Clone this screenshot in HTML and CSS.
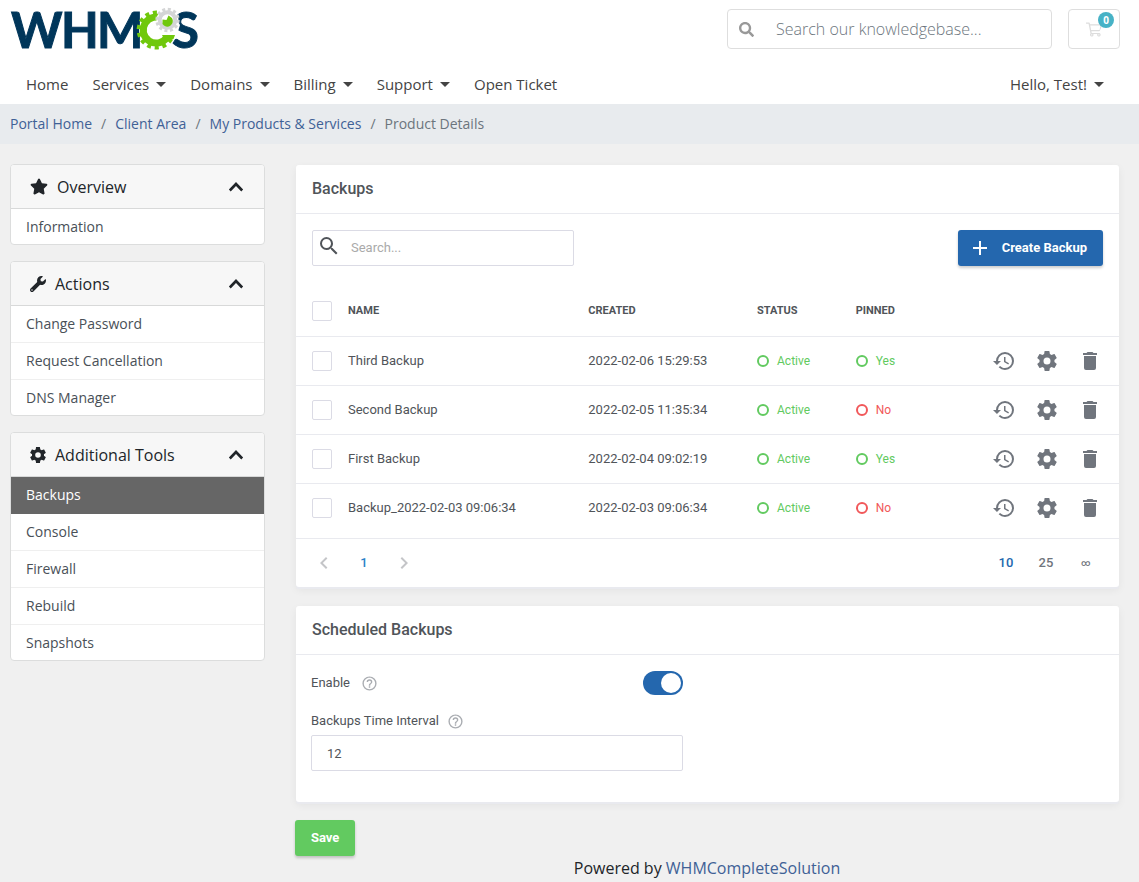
FILE: index.html
```html
<!DOCTYPE html>
<html lang="en">
<head>
<meta charset="utf-8">
<title>Backups - WHMCS</title>
<meta name="viewport" content="width=device-width, initial-scale=1">
<link rel="stylesheet" href="styles.css">
</head>
<body>
<svg class="sprite" aria-hidden="true">
  <symbol id="i-search" viewBox="0 0 512 512"><path d="M505 442.700 405.300 343c-4.500-4.500-10.600-7-17-7H372c27.600-35.300 44-79.700 44-128C416 93.100 322.900 0 208 0S0 93.100 0 208s93.100 208 208 208c48.300 0 92.700-16.400 128-44v16.300c0 6.400 2.500 12.500 7 17l99.700 99.700c9.400 9.400 24.600 9.400 33.900 0l28.300-28.300c9.400-9.400 9.400-24.600.1-34zM208 336c-70.700 0-128-57.200-128-128 0-70.700 57.200-128 128-128 70.700 0 128 57.200 128 128 0 70.700-57.200 128-128 128z"/></symbol>
  <symbol id="i-magnify" viewBox="0 0 24 24"><path d="M9.500 3A6.500 6.500 0 0 1 16 9.500c0 1.610-.59 3.090-1.560 4.230l.27.270h.79l5 5-1.500 1.500-5-5v-.79l-.27-.27A6.516 6.516 0 0 1 9.500 16 6.500 6.500 0 0 1 3 9.500 6.500 6.500 0 0 1 9.500 3m0 2C7 5 5 7 5 9.500S7 14 9.500 14 14 12 14 9.500 12 5 9.500 5z"/></symbol>
  <symbol id="i-cart" viewBox="0 0 576 512"><path d="M551.991 64H144.280l-8.726-44.608C133.350 8.128 123.478 0 112 0H12C5.373 0 0 5.373 0 12v24c0 6.627 5.373 12 12 12h80.240l69.594 355.701C150.796 415.201 144 430.802 144 448c0 35.346 28.654 64 64 64s64-28.654 64-64a63.681 63.681 0 0 0-8.583-32h145.167a63.681 63.681 0 0 0-8.583 32c0 35.346 28.654 64 64 64 35.346 0 64-28.654 64-64 0-17.993-7.435-34.240-19.388-45.868C506.022 391.891 496.760 384 485.328 384H206.888l-12.522-64h277.882c14.800 0 27.700-10.100 31.100-24.500l79.700-192C587.600 83.500 572.600 64 551.991 64zM208 472c-13.234 0-24-10.766-24-24s10.766-24 24-24 24 10.766 24 24-10.766 24-24 24zm256 0c-13.234 0-24-10.766-24-24s10.766-24 24-24 24 10.766 24 24-10.766 24-24 24zm23.438-200H184.980l-31.310-160h368.548l-34.780 160z"/></symbol>
  <symbol id="i-star" viewBox="0 0 576 512"><path d="M259.300 17.800 194 150.200 47.900 171.500c-26.200 3.800-36.700 36.100-17.700 54.600l105.700 103-25 145.500c-4.500 26.300 23.200 46 46.400 33.700L288 439.600l130.700 68.700c23.200 12.200 50.900-7.400 46.400-33.700l-25-145.500 105.700-103c19-18.500 8.500-50.800-17.700-54.600L382 150.200 316.700 17.800c-11.700-23.600-45.600-23.900-57.400 0z"/></symbol>
  <symbol id="i-wrench" viewBox="0 0 512 512"><path d="M507.730 109.100c-2.240-9.030-13.540-12.090-20.120-5.510l-74.360 74.360-67.880-11.310-11.310-67.880 74.360-74.360c6.620-6.620 3.430-17.900-5.660-20.160-47.380-11.740-99.550.91-136.580 37.930-39.640 39.640-50.550 97.100-34.050 147.200L18.740 402.760c-24.990 24.990-24.990 65.510 0 90.500 24.990 24.990 65.510 24.990 90.500 0l213.210-213.210c50.120 16.710 107.470 5.680 147.370-34.220 37.070-37.070 49.700-89.320 37.910-136.730zM64 472c-13.250 0-24-10.750-24-24 0-13.260 10.750-24 24-24s24 10.740 24 24c0 13.250-10.750 24-24 24z"/></symbol>
  <symbol id="i-cog" viewBox="0 0 24 24"><path d="M12 15.500A3.500 3.500 0 0 1 8.500 12 3.500 3.500 0 0 1 12 8.500a3.500 3.500 0 0 1 3.500 3.500 3.500 3.500 0 0 1-3.500 3.500m7.430-2.530c.04-.32.07-.64.07-.97s-.03-.66-.07-1l2.110-1.630c.19-.15.24-.42.12-.64l-2-3.460c-.12-.22-.39-.31-.61-.22l-2.490 1c-.52-.39-1.060-.73-1.690-.98l-.37-2.650A.506.506 0 0 0 14 2h-4c-.25 0-.46.18-.5.42l-.37 2.650c-.63.25-1.170.59-1.690.98l-2.490-1c-.22-.09-.49 0-.61.22l-2 3.460c-.13.22-.07.49.12.64L4.570 11c-.04.340-.07.670-.07 1s.03.650.07.970l-2.110 1.660c-.19.150-.25.420-.12.640l2 3.460c.12.220.390.300.610.220l2.490-1.010c.520.400 1.060.740 1.690.990l.37 2.650c.04.240.250.420.500.420h4c.250 0 .460-.180.500-.420l.37-2.650c.63-.260 1.170-.590 1.690-.990l2.490 1.010c.220.080.490 0 .610-.220l2-3.460c.120-.220.070-.490-.120-.640z"/></symbol>
  <symbol id="i-up" viewBox="0 0 16 16"><path d="M1.800 11.500 8 5l6.200 6.500" fill="none" stroke="currentColor" stroke-width="2.600"/></symbol>
  <symbol id="i-history" viewBox="0 0 24 24"><path d="M13.500 8H12v5l4.280 2.540.720-1.210-3.500-2.080V8M13 3a9 9 0 0 0-9 9H1l3.960 4.030L9 12H6a7 7 0 0 1 7-7 7 7 0 0 1 7 7 7 7 0 0 1-7 7c-1.930 0-3.680-.79-4.940-2.060l-1.420 1.420A8.896 8.896 0 0 0 13 21a9 9 0 0 0 9-9 9 9 0 0 0-9-9"/></symbol>
  <symbol id="i-trash" viewBox="0 0 24 24"><path d="M19 4h-3.500l-1-1h-5l-1 1H5v2h14M6 19a2 2 0 0 0 2 2h8a2 2 0 0 0 2-2V7H6z"/></symbol>
  <symbol id="i-plus" viewBox="0 0 24 24"><path d="M19 13h-6v6h-2v-6H5v-2h6V5h2v6h6z"/></symbol>
  <symbol id="i-left" viewBox="0 0 24 24"><path d="M15.410 16.580 10.830 12l4.580-4.590L14 6l-6 6 6 6z"/></symbol>
  <symbol id="i-right" viewBox="0 0 24 24"><path d="M8.590 16.580 13.170 12 8.590 7.410 10 6l6 6-6 6z"/></symbol>
  <symbol id="i-help" viewBox="0 0 24 24"><path d="M11 18h2v-2h-2v2m1-16A10 10 0 0 0 2 12a10 10 0 0 0 10 10 10 10 0 0 0 10-10A10 10 0 0 0 12 2m0 18c-4.410 0-8-3.590-8-8s3.590-8 8-8 8 3.590 8 8-3.590 8-8 8m0-14a4 4 0 0 0-4 4h2a2 2 0 0 1 2-2 2 2 0 0 1 2 2c0 2-3 1.750-3 5h2c0-2.250 3-2.500 3-5a4 4 0 0 0-4-4z"/></symbol>
</svg>

<header class="header">
  <div class="topbar">
    <a class="logo" href="#" aria-label="WHMCS">
      <svg width="196" height="62" viewBox="10 0 196 62">
        <g class="logo-letters">
          <text x="11" y="48">W</text><text x="61" y="48">H</text><text x="97" y="48">M</text><text x="172" y="48">S</text>
        </g>
        <circle cx="156" cy="30" r="17" fill="#fff"/>
        <path d="M156 30l18-15 6 10-4 13-12 6z" fill="#fff"/>
        <g fill="none" stroke="#70c80c">
          <path d="M166.900 37.500A13 13 0 1 1 163 19" stroke-width="7"/>
          <path d="M171.200 39A17.500 17.500 0 1 1 164 14.400" stroke-width="4" stroke-dasharray="4 3.700"/>
        </g>
        <path d="M162 35h13l-1.500 4-8 3z" fill="#70c80c"/>
        <circle cx="167.500" cy="20" r="11" fill="#fff"/>
        <g fill="none" stroke="#d4d5d6">
          <circle cx="167.500" cy="20" r="7.800" stroke-width="4"/>
          <circle cx="167.500" cy="20" r="10.700" stroke-width="3" stroke-dasharray="3 2.600"/>
        </g>
        <path d="M162.500 19.500l4 .500 2-4.500 3.500 2.500a5.500 5.500 0 0 1-9.500 6z" fill="#70c80c"/>
      </svg>
    </a>
    <form class="kb" role="search">
      <button class="kb-btn" type="button" aria-label="Search"><svg width="15" height="15"><use href="#i-search"/></svg></button>
      <input class="kb-input" type="text" aria-label="Search our knowledgebase" placeholder="Search our knowledgebase...">
    </form>
    <a class="cart" href="#" aria-label="Shopping cart"><svg width="16" height="15"><use href="#i-cart"/></svg><span class="badge">0</span></a>
  </div>
  <nav class="nav">
    <a href="#">Home</a>
    <a class="drop" href="#">Services</a>
    <a class="drop" href="#">Domains</a>
    <a class="drop" href="#">Billing</a>
    <a class="drop" href="#">Support</a>
    <a href="#">Open Ticket</a>
    <a class="drop user" href="#">Hello, Test!</a>
  </nav>
</header>

<nav class="crumbs" aria-label="Breadcrumb">
  <a href="#">Portal Home</a><span>/</span><a href="#">Client Area</a><span>/</span><a href="#">My Products &amp; Services</a><span>/</span><span class="here">Product Details</span>
</nav>

<div class="page">
  <aside class="sidebar">
    <section class="side-card">
      <h3><svg width="18" height="17"><use href="#i-star"/></svg>Overview<svg class="chev" width="16" height="16"><use href="#i-up"/></svg></h3>
      <a href="#">Information</a>
    </section>
    <section class="side-card">
      <h3><svg width="16" height="16"><use href="#i-wrench"/></svg>Actions<svg class="chev" width="16" height="16"><use href="#i-up"/></svg></h3>
      <a href="#">Change Password</a>
      <a href="#">Request Cancellation</a>
      <a href="#">DNS Manager</a>
    </section>
    <section class="side-card">
      <h3><svg width="16" height="16" viewBox="2 2 20 20"><use href="#i-cog" width="24" height="24"/></svg>Additional Tools<svg class="chev" width="16" height="16"><use href="#i-up"/></svg></h3>
      <a class="active" href="#">Backups</a>
      <a href="#">Console</a>
      <a href="#">Firewall</a>
      <a href="#">Rebuild</a>
      <a href="#">Snapshots</a>
    </section>
  </aside>

  <main class="main">
    <section class="panel">
      <h2>Backups</h2>
      <div class="tools">
        <div class="search"><svg width="24" height="24"><use href="#i-magnify"/></svg><input type="text" aria-label="Search backups" placeholder="Search..."></div>
        <button class="btn" type="button"><svg width="24" height="24"><use href="#i-plus"/></svg>Create Backup</button>
      </div>
      <table class="grid">
        <thead>
          <tr><th class="c-check"><input type="checkbox" aria-label="Select all"></th><th class="c-name">Name</th><th class="c-created">Created</th><th class="c-status">Status</th><th class="c-pinned">Pinned</th><th></th></tr>
        </thead>
        <tbody>
          <tr><td><input type="checkbox" aria-label="Select Third Backup"></td><td>Third Backup</td><td>2022-02-06 15:29:53</td><td><span class="state ok">Active</span></td><td><span class="state ok">Yes</span></td>
            <td><div class="acts"><button type="button" aria-label="Restore"><svg><use href="#i-history"/></svg></button><button type="button" aria-label="Settings"><svg><use href="#i-cog"/></svg></button><button type="button" aria-label="Delete"><svg><use href="#i-trash"/></svg></button></div></td></tr>
          <tr><td><input type="checkbox" aria-label="Select Second Backup"></td><td>Second Backup</td><td>2022-02-05 11:35:34</td><td><span class="state ok">Active</span></td><td><span class="state bad">No</span></td>
            <td><div class="acts"><button type="button" aria-label="Restore"><svg><use href="#i-history"/></svg></button><button type="button" aria-label="Settings"><svg><use href="#i-cog"/></svg></button><button type="button" aria-label="Delete"><svg><use href="#i-trash"/></svg></button></div></td></tr>
          <tr><td><input type="checkbox" aria-label="Select First Backup"></td><td>First Backup</td><td>2022-02-04 09:02:19</td><td><span class="state ok">Active</span></td><td><span class="state ok">Yes</span></td>
            <td><div class="acts"><button type="button" aria-label="Restore"><svg><use href="#i-history"/></svg></button><button type="button" aria-label="Settings"><svg><use href="#i-cog"/></svg></button><button type="button" aria-label="Delete"><svg><use href="#i-trash"/></svg></button></div></td></tr>
          <tr><td><input type="checkbox" aria-label="Select Backup_2022-02-03 09:06:34"></td><td>Backup_2022-02-03 09:06:34</td><td>2022-02-03 09:06:34</td><td><span class="state ok">Active</span></td><td><span class="state bad">No</span></td>
            <td><div class="acts"><button type="button" aria-label="Restore"><svg><use href="#i-history"/></svg></button><button type="button" aria-label="Settings"><svg><use href="#i-cog"/></svg></button><button type="button" aria-label="Delete"><svg><use href="#i-trash"/></svg></button></div></td></tr>
        </tbody>
      </table>
      <div class="pager">
        <button class="arrow" type="button" aria-label="Previous page"><svg width="24" height="24"><use href="#i-left"/></svg></button>
        <button class="current" type="button">1</button>
        <button class="arrow" type="button" aria-label="Next page"><svg width="24" height="24"><use href="#i-right"/></svg></button>
        <button class="size current-size" type="button">10</button>
        <button type="button">25</button>
        <button class="inf" type="button">∞</button>
      </div>
    </section>

    <form class="schedule">
      <section class="panel">
        <h2>Scheduled Backups</h2>
        <div class="fields">
          <div class="field-row">
            <label for="enable">Enable</label><svg class="help" width="17" height="17"><use href="#i-help"/></svg>
            <input class="switch" id="enable" type="checkbox" role="switch" checked>
          </div>
          <div class="field-label">
            <label for="interval">Backups Time Interval</label><svg class="help" width="17" height="17"><use href="#i-help"/></svg>
          </div>
          <input class="text" id="interval" type="text" value="12">
        </div>
      </section>
      <button class="btn save" type="button">Save</button>
    </form>
    <footer class="footer">Powered by <a href="#">WHMCompleteSolution</a></footer>
  </main>
</div>
</body>
</html>
```
FILE: styles.css
```css
* { box-sizing: border-box; }
body { margin: 0; background: #f0f0f0; font-family: "Open Sans", sans-serif; font-size: 14px; line-height: 22px; color: #212529; }
a { text-decoration: none; }
svg { fill: currentColor; flex: none; display: block; }
input, button { font: inherit; color: inherit; }
button { border: 0; background: none; padding: 0; cursor: pointer; }
.sprite { width: 0; height: 0; position: absolute; }

.header { background: #fff; }
.topbar { display: flex; align-items: flex-start; gap: 16px; padding: 0 19px 0 10px; height: 64px; }
.logo { margin-right: auto; }
.logo-letters { font-family: Lato, sans-serif; font-weight: 700; font-size: 49px; fill: #00365a; stroke: #00365a; stroke-width: 1; }
.kb { display: flex; width: 325px; height: 40px; margin-top: 9px; border: 1px solid #dedede; border-radius: 4px; background: #fff; }
.kb-btn { width: 37px; display: grid; place-items: center; color: #999; }
.kb-input { flex: 1; min-width: 0; border: 0; outline: 0; background: none; padding: 0 11px; font-size: 16px; font-weight: 300; }
.kb-input::placeholder { color: #6c757d; opacity: 1; }
.cart { position: relative; width: 52px; height: 40px; margin-top: 9px; border: 1px solid #dedede; border-radius: 4px; display: grid; place-items: center; color: #ddd; }
.badge { position: absolute; top: 2px; right: 5px; width: 16px; height: 16px; border-radius: 8px; background: #47b2c6; color: #fff; font-size: 10px; font-weight: 700; line-height: 16px; text-align: center; }
.nav { display: flex; gap: 24px; height: 40px; padding: 0 35px 0 26px; align-items: center; font-size: 15px; }
.nav a { color: #444; }
.drop { display: flex; align-items: center; gap: 7px; }
.drop::after { content: ""; border: 5px solid transparent; border-top-color: #444; border-bottom: 0; }
.user { margin-left: auto; }

.crumbs { display: flex; gap: 9px; align-items: center; height: 40px; padding: 0 10px; background: #e8ebee; color: #6c757d; }
.crumbs a, .footer a { color: #3f6196; }

.page { display: flex; gap: 30px; padding: 20px 20px 0 10px; align-items: flex-start; }
.sidebar { flex: 0 0 255px; display: grid; gap: 16px; }
.side-card { border: 1px solid #dcdddd; border-radius: 4px; background: #fff; overflow: hidden; }
.side-card h3 { display: flex; align-items: center; gap: 9px; margin: 0; height: 44px; padding: 0 20px 0 19px; background: #f7f7f7; border-bottom: 1px solid #d8d9d9; font-size: 16px; font-weight: 400; }
.chev { margin-left: auto; }
.side-card a { display: flex; align-items: center; height: 37px; padding: 0 15px; border-bottom: 1px solid #efefef; color: #495057; }
.side-card a:last-child { height: 35px; border-bottom: 0; }
.side-card .active { background: #666; border-color: #666; color: #fff; font-weight: 500; }

.main { flex: 1; min-width: 0; font-family: Roboto, sans-serif; font-size: 13px; line-height: 20px; color: #505459; }
.panel { margin: 1px 0 0 1px; background: #fff; border-radius: 3px; box-shadow: 0 2px 0 #e9eaef, 0 3px 8px rgba(0, 0, 0, .06); }
.panel h2 { margin: 0; padding: 0 16px; font-size: 16px; font-weight: 500; line-height: 48px; border-bottom: 1px solid #e9eaef; }
.tools { display: flex; justify-content: space-between; padding: 16px 16px 20px; }
.search { display: flex; align-items: center; width: 262px; height: 36px; padding-left: 4px; border: 1px solid #dbdbe5; border-radius: 2px; }
.search svg { margin-bottom: 4px; }
.search input { flex: 1; min-width: 0; border: 0; outline: 0; padding: 0 10px; background: none; }
.search input::placeholder { color: #aaa; opacity: 1; }
.btn { display: flex; align-items: center; gap: 10px; height: 36px; padding: 0 16px 0 10px; border-radius: 3px; background: #2467ae; color: #fff; font-weight: 700; box-shadow: 0 2px 3px rgba(0, 0, 0, .2); }

.grid { width: 100%; table-layout: fixed; border-collapse: separate; border-spacing: 0; border-bottom: 1px solid #e9eaef; padding-bottom: 5px; }
.grid th, .grid td { height: 49px; padding: 0 0 0 16px; text-align: left; border-bottom: 1px solid #e9eaef; white-space: nowrap; }
.grid th { height: 51px; font-size: 11px; font-weight: 700; text-transform: uppercase; }
.grid tbody tr:last-child td { border-bottom-color: transparent; }
.c-check { width: 36px; }
.c-name { width: 29.2%; }
.c-created { width: 20.5%; }
.c-status { width: 12%; }
.c-pinned { width: 12%; }
.grid input { display: block; appearance: none; width: 20px; height: 20px; margin: 0; border: 1px solid #dbdbe5; border-radius: 2px; background: #fff; }
.state { display: flex; align-items: center; gap: 8px; font-size: 12px; }
.state::before { content: ""; box-sizing: border-box; width: 12px; height: 12px; border: 2px solid; border-radius: 50%; }
.ok { color: #62ca60; }
.bad { color: #f1585a; }
.acts { display: flex; justify-content: flex-end; gap: 19px; padding-right: 17px; color: #70757d; }
.acts svg { width: 24px; height: 24px; }

.pager { display: flex; height: 48px; padding: 0 13px 0 8px; align-items: center; font-weight: 500; color: #70757d; }
.pager button { width: 40px; height: 40px; display: grid; place-items: center; }
.pager .arrow { color: #c4c5c8; }
.pager .current { color: #2a82c9; }
.pager .size { margin-left: auto; }
.pager .current-size { color: #2467ae; }
.pager .inf { font-size: 9px; }

.schedule { padding-top: 18px; }
.fields { width: 50%; padding: 16px 25px 31px 15px; }
.field-row, .field-label { display: flex; align-items: center; height: 24px; gap: 11px; }
.field-label { height: 40px; gap: 8px; padding-top: 12px; }
.help { color: #a9acb1; }
.switch { appearance: none; margin: 0 0 0 auto; width: 40px; height: 24px; padding: 2px; border-radius: 12px; background: #2467ae; display: flex; justify-content: flex-end; }
.switch::before { content: ""; width: 20px; height: 20px; border-radius: 50%; background: #fff; }
.text { display: block; width: 100%; height: 36px; padding: 0 15px; border: 1px solid #dbdbe5; border-radius: 2px; background: #fff; }
.save { margin-top: 18px; padding: 0 16px; background: #62ca60; }
.footer { font-family: "Open Sans", sans-serif; font-size: 16px; line-height: 24px; text-align: center; color: #212529; }
```
